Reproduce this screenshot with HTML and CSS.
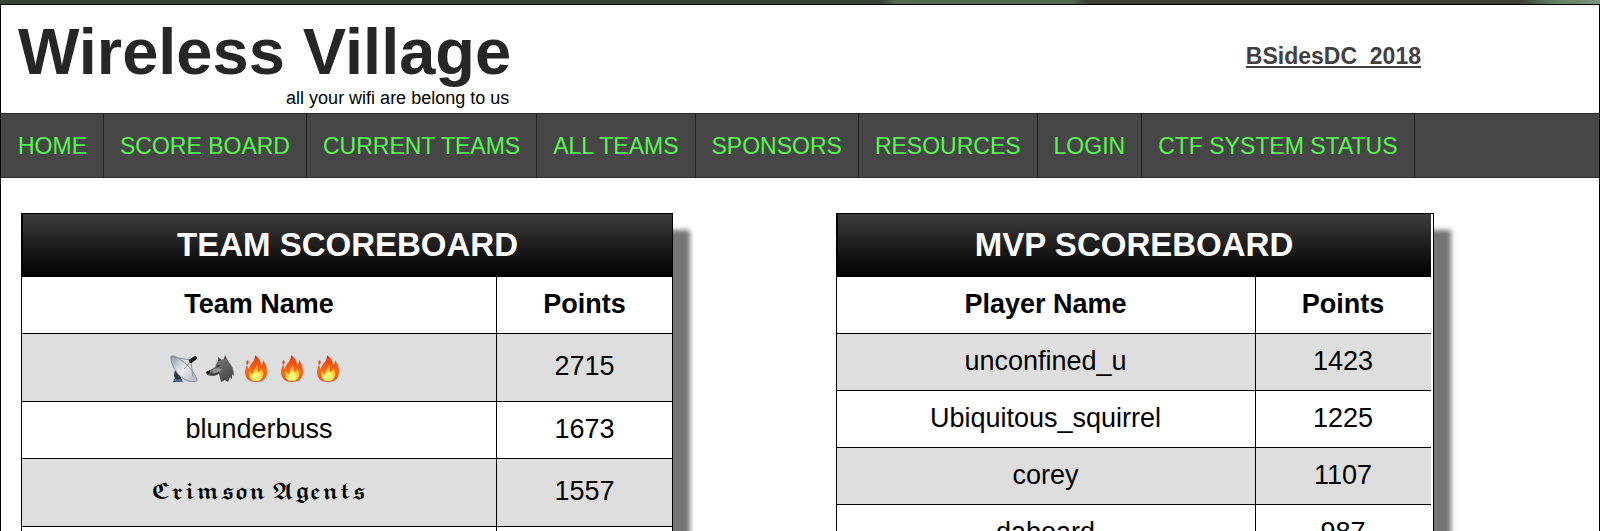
FILE: index.html
```
<!DOCTYPE html>
<html lang="en">
<head>
    <meta charset="UTF-8">
    <title>Wireless Village</title>
    <link rel="stylesheet" href="styles.css">
</head>
<body>
    <svg class="sprites" aria-hidden="true">
        <defs>
            <linearGradient id="flameOuter" x1="0" y1="0" x2="0" y2="1">
                <stop offset="0" stop-color="#f0330c"/>
                <stop offset="0.6" stop-color="#fb6b14"/>
                <stop offset="1" stop-color="#f64a10"/>
            </linearGradient>
            <radialGradient id="flameInner" cx="0.5" cy="0.85" r="0.8">
                <stop offset="0" stop-color="#fffde0"/>
                <stop offset="0.35" stop-color="#ffee4a"/>
                <stop offset="1" stop-color="#ff8a1c"/>
            </radialGradient>
            <linearGradient id="dishFace" x1="0" y1="0" x2="1" y2="1">
                <stop offset="0" stop-color="#8f959d"/>
                <stop offset="0.5" stop-color="#eceef2"/>
                <stop offset="1" stop-color="#a9afb8"/>
            </linearGradient>
            <linearGradient id="wolfFur" x1="0" y1="0" x2="1" y2="1">
                <stop offset="0" stop-color="#858585"/>
                <stop offset="1" stop-color="#3d3d3d"/>
            </linearGradient>
        </defs>
        <symbol id="fire" viewBox="0 0 28 28">
            <path fill="url(#flameOuter)" d="M13 0c4 3 6 6 6 10 2-1 2-3 2-5 3 4 4 8 4 12 0 6-4 10-11 10S3 23 3 17c0-3 1-5 2-7 1 2 1 3 2 4 0-5 7-8 6-14z"/>
            <path fill="#ee3a16" d="M6 5c-2 1-2 3-1 5 2-1 2-3 1-5z"/>
            <path fill="url(#flameInner)" d="M14 9c2 3 2 5 2 8 2-1 3-2 3-4 2 3 3 5 2 8-1 4-4 5-7 5s-7-2-7-6c0-2 0-3 1-4 1 2 2 3 3 3 0-4 4-6 3-10z"/>
            <path fill="#fff77a" d="M14 17c3 2 4 4 4 6 0 2-2 3-4 3s-4-1-4-3c0-3 2-4 4-6z"/>
        </symbol>
        <symbol id="dish" viewBox="0 0 28 28">
            <path fill="#2d3540" d="M5 15l5 4 2 8H3l2-3-1-4z"/>
            <path fill="#496785" d="M4 24h8l1 3H3z"/>
            <path fill="url(#dishFace)" stroke="#8c929b" d="M1 1C0 6 4 15 10 21c6 5 12 7 17 5C28 20 9-1 1 1z"/>
            <path fill="none" stroke="#8b9199" d="M2 2l19 3M21 7l2 15M14 14l7-8"/>
            <path fill="none" stroke="#16181b" stroke-width="4" stroke-linecap="round" d="M21 6l4-3"/>
        </symbol>
        <symbol id="wolf" viewBox="0 0 28 28">
            <path fill="#4d4646" d="M12 8l0-6 5 4zM17 7l2-7 4 8z"/>
            <path fill="#b38582" d="M19 7l1-4 1 5z"/>
            <path fill="url(#wolfFur)" d="M1 17l8-5 2-5 6-3 5 2c4 4 6 9 6 15l-2-2 0 5-2-2-2 5-3-2-4 2-2-8c-3 2-8 3-12 1z"/>
            <path fill="#969696" d="M8 14c3-1 6-1 8 1-2 2-6 3-10 3z"/>
            <path fill="#171717" d="M0 17l4-2 0 3-3 2zM10 11l4-1-2 2z"/>
            <path fill="none" stroke="#252525" d="M4 19c3 1 7 0 9-2"/>
        </symbol>
    </svg>
    <div class="wrapper">
        <div class="banner">
            <div class="brand">
                <h1 class="title">Wireless Village</h1>
                <p class="tagline">all your wifi are belong to us</p>
            </div>
            <a class="event" href="#">BSidesDC_2018</a>
        </div>
        <nav class="menu">
            <a href="#">HOME</a>
            <a href="#">SCORE BOARD</a>
            <a href="#">CURRENT TEAMS</a>
            <a href="#">ALL TEAMS</a>
            <a href="#">SPONSORS</a>
            <a href="#">RESOURCES</a>
            <a href="#">LOGIN</a>
            <a href="#">CTF SYSTEM STATUS</a>
        </nav>
        <div class="boards">
            <div class="board teams">
                <table>
                    <thead>
                        <tr><th class="heading" colspan="2">TEAM SCOREBOARD</th></tr>
                        <tr><th>Team Name</th><th class="points">Points</th></tr>
                    </thead>
                    <tbody>
                        <tr class="tall">
                            <td>
                                <div class="emojis">
                                    <svg role="img" aria-label="satellite antenna"><use href="#dish"/></svg>
                                    <svg role="img" aria-label="wolf"><use href="#wolf"/></svg>
                                    <svg role="img" aria-label="fire"><use href="#fire"/></svg>
                                    <svg role="img" aria-label="fire"><use href="#fire"/></svg>
                                    <svg role="img" aria-label="fire"><use href="#fire"/></svg>
                                </div>
                            </td>
                            <td>2715</td>
                        </tr>
                        <tr><td>blunderbuss</td><td>1673</td></tr>
                        <tr class="tall"><td class="fraktur">𝕮𝖗𝖎𝖒𝖘𝖔𝖓 𝕬𝖌𝖊𝖓𝖙𝖘</td><td>1557</td></tr>
                        <tr><td></td><td></td></tr>
                    </tbody>
                </table>
            </div>
            <div class="board players">
                <table>
                    <thead>
                        <tr><th class="heading" colspan="2">MVP SCOREBOARD</th></tr>
                        <tr><th>Player Name</th><th class="points">Points</th></tr>
                    </thead>
                    <tbody>
                        <tr><td>unconfined_u</td><td>1423</td></tr>
                        <tr><td>Ubiquitous_squirrel</td><td>1225</td></tr>
                        <tr><td>corey</td><td>1107</td></tr>
                        <tr><td>daboard</td><td>987</td></tr>
                    </tbody>
                </table>
            </div>
        </div>
    </div>
</body>
</html>
```

FILE: styles.css
```
body {
    margin: 0;
    padding-top: 4px;
    height: 100vh;
    box-sizing: border-box;
    overflow: hidden;
    background: linear-gradient(90deg, #3c3f3a 0%, #3c3f3a 55%, #4f6b4c 56%, #4f6b4c 67%, #3c3c3a 68%, #3c3c3a 95%, #5f7f60 97%, #7a947a 100%);
    font-family: "Liberation Sans", Arial, sans-serif;
    color: #000;
}
/* icon definitions, takes no room on the page */
.sprites {
    position: absolute;
    width: 0;
    height: 0;
}
.wrapper {
    border: 1px solid #000;
    background-color: #fff;
}
.banner {
    display: flex;
    justify-content: space-between;
    align-items: flex-start;
    height: 108px;
    padding: 0 178px 0 17px;
}
.brand {
    text-align: right;
}
.title {
    margin: 10px 0 0 0;
    font-size: 65px;
    line-height: 74px;
    color: #262626;
}
.tagline {
    margin: 0;
    padding-right: 2px;
    font-size: 18px;
    line-height: 18px;
}
.event {
    margin-top: 38px;
    font-size: 23px;
    line-height: 26px;
    font-weight: bold;
    color: #404040;
    text-decoration-skip-ink: none;
}
.menu {
    display: flex;
    padding-left: 1px;
    background-color: #464646;
    border-top: 1px solid #2b2b2b;
    border-bottom: 1px solid #2b2b2b;
}
.menu a {
    padding: 2px 16px 0 16px;
    border-right: 1px solid #222;
    font-size: 23px;
    line-height: 61px;
    color: #55f94f;
    text-decoration: none;
    white-space: nowrap;
}
.boards {
    display: grid;
    grid-template-columns: 1fr 1fr;
    gap: 51px;
    align-items: start;
    padding: 35px 0 0 20px;
}
.board {
    box-sizing: border-box;
    border: 1px solid #000;
    background-color: #fff;
    box-shadow: 17px 17px 5px #757575;
}
.teams {
    width: 85%;
    min-width: 652px;
}
.players {
    width: 78%;
    min-width: 598px;
    padding-right: 2px;
}
table {
    width: 100%;
    border-spacing: 0;
}
th, td {
    height: 54px;
    padding: 0 0 2px 0;
    border-bottom: 1px solid #000;
    font-size: 27px;
    line-height: 31px;
    text-align: center;
}
th + th, td + td {
    border-left: 1px solid #000;
}
.points {
    width: 175px;
}
.heading {
    height: 62px;
    padding: 0;
    border-left: 1px solid #000;
    background: linear-gradient(#3c3c3c, #000);
    font-size: 33px;
    line-height: 38px;
    color: #fff;
}
tbody tr:nth-child(odd) {
    background-color: #dedede;
}
.tall td {
    height: 65px;
}
.emojis {
    display: flex;
    justify-content: center;
    gap: 8px;
    padding: 4px 6px 0 0;
}
.emojis svg {
    width: 28px;
    height: 28px;
}
.tall .fraktur {
    font-family: "Liberation Sans", "DejaVu Math TeX Gyre", "DejaVu Sans", serif;
    font-size: 21px;
}
```
